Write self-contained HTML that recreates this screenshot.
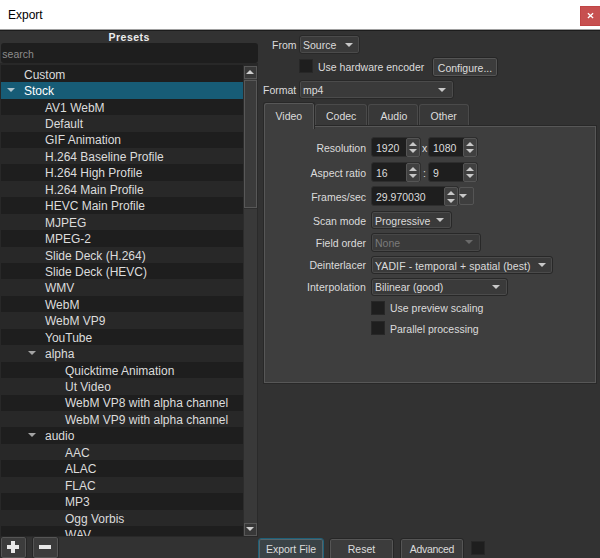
<!DOCTYPE html>
<html><head><meta charset="utf-8">
<style>
*{box-sizing:border-box;margin:0;padding:0}
html,body{width:600px;height:558px;overflow:hidden;background:#323232;font-family:"Liberation Sans",sans-serif;color:#dcdcdc}
.a,.t,.row,.cb,.btn,.sb,.spb,.chk,.tab{position:absolute}
.t{white-space:pre;font-size:10.5px;line-height:12px}
.r{text-align:right}
.c{text-align:center}
.row{left:0;width:242px}
.ev{background:#1e1e1e}
.od{background:#282828}
.sel{background:#175c76}
.tr{position:absolute;white-space:pre;font-size:12px;line-height:14px;color:#dcdcdc}
.cb{border:1px solid #282828;box-shadow:inset 0 0 0 1px #4b4b4b;background:#3a3a3a;border-radius:3px}
.btn{border:1px solid #262626;box-shadow:inset 0 0 0 1px #555;background:#3c3c3c;border-radius:3px}
.sb{border:1px solid #2e2e2e;background:#1e1e1e;border-radius:3px}
.spb{border:1px solid #555;background:#404040;border-radius:2px}
.chk{width:14px;height:14px;background:#1e1e1e;border:1px solid #272727}
.tab{background:#383838;border:1px solid #4a4a4a;border-bottom:none;border-radius:3px 3px 0 0;box-shadow:1px 0 0 0 #2c2c2c}
</style></head><body>

<div class="a" style="left:0px;top:0px;width:600px;height:29px;background:#fff"></div>
<div class="t" style="left:8px;top:8px;font-size:12px;color:#000;line-height:14px">Export</div>
<div class="a" style="left:0px;top:29px;width:600px;height:1px;background:#a0a0a0"></div>
<div class="a" style="left:0px;top:30px;width:600px;height:1px;background:#1c1c1c"></div>
<div class="a" style="left:580px;top:6px;width:20px;height:20px;background:#c75050;border:1px solid #c04545;border-right:none"></div>
<svg class="a" style="left:587px;top:12px" width="7" height="7" viewBox="0 0 7 7"><path d="M0.9 1.2L6.1 5.9M6.1 1.2L0.9 5.9" stroke="#fff" stroke-width="1.3"/></svg>
<div class="t" style="left:108.5px;top:31px;color:#ececec;font-weight:bold;letter-spacing:0.5px">Presets</div>
<div class="a" style="left:0px;top:63px;width:258px;height:474px;background:#282828"></div>
<div class="a" style="left:1px;top:43px;width:257px;height:20px;background:#1e1e1e;border-radius:3px"></div>
<div class="t" style="left:2.3px;top:48.3px;color:#8c8c8c">search</div>
<div class="a" style="left:0;top:0;width:600px;height:558px;overflow:hidden">
<div class="a" style="left:1px;top:65px;width:242px;height:471px;overflow:hidden;background:#1e1e1e">
<div class="row ev" style="left:0;top:0.76px;height:16.440px"></div>
<div class="row sel" style="left:0;top:17.20px;height:16.440px"></div>
<div class="row ev" style="left:0;top:33.64px;height:16.440px"></div>
<div class="row od" style="left:0;top:50.08px;height:16.440px"></div>
<div class="row ev" style="left:0;top:66.52px;height:16.440px"></div>
<div class="row od" style="left:0;top:82.96px;height:16.440px"></div>
<div class="row ev" style="left:0;top:99.40px;height:16.440px"></div>
<div class="row od" style="left:0;top:115.84px;height:16.440px"></div>
<div class="row ev" style="left:0;top:132.28px;height:16.440px"></div>
<div class="row od" style="left:0;top:148.72px;height:16.440px"></div>
<div class="row ev" style="left:0;top:165.16px;height:16.440px"></div>
<div class="row od" style="left:0;top:181.60px;height:16.440px"></div>
<div class="row ev" style="left:0;top:198.04px;height:16.440px"></div>
<div class="row od" style="left:0;top:214.48px;height:16.440px"></div>
<div class="row ev" style="left:0;top:230.92px;height:16.440px"></div>
<div class="row od" style="left:0;top:247.36px;height:16.440px"></div>
<div class="row ev" style="left:0;top:263.80px;height:16.440px"></div>
<div class="row od" style="left:0;top:280.24px;height:16.440px"></div>
<div class="row ev" style="left:0;top:296.68px;height:16.440px"></div>
<div class="row od" style="left:0;top:313.12px;height:16.440px"></div>
<div class="row ev" style="left:0;top:329.56px;height:16.440px"></div>
<div class="row od" style="left:0;top:346.00px;height:16.440px"></div>
<div class="row ev" style="left:0;top:362.44px;height:16.440px"></div>
<div class="row od" style="left:0;top:378.88px;height:16.440px"></div>
<div class="row ev" style="left:0;top:395.32px;height:16.440px"></div>
<div class="row od" style="left:0;top:411.76px;height:16.440px"></div>
<div class="row ev" style="left:0;top:428.20px;height:16.440px"></div>
<div class="row od" style="left:0;top:444.64px;height:16.440px"></div>
<div class="row ev" style="left:0;top:461.08px;height:16.440px"></div>
<div class="tr" style="left:23px;top:2.66px">Custom</div>
<svg class="a" style="left:6px;top:22.90px" width="8" height="4"><polygon points="0,0 4,4 8,0" fill="#b0c4cc"/></svg>
<div class="tr" style="left:23px;top:19.10px;color:#fff">Stock</div>
<div class="tr" style="left:44px;top:35.54px">AV1 WebM</div>
<div class="tr" style="left:44px;top:51.98px">Default</div>
<div class="tr" style="left:44px;top:68.42px">GIF Animation</div>
<div class="tr" style="left:44px;top:84.86px">H.264 Baseline Profile</div>
<div class="tr" style="left:44px;top:101.30px">H.264 High Profile</div>
<div class="tr" style="left:44px;top:117.74px">H.264 Main Profile</div>
<div class="tr" style="left:44px;top:134.18px">HEVC Main Profile</div>
<div class="tr" style="left:44px;top:150.62px">MJPEG</div>
<div class="tr" style="left:44px;top:167.06px">MPEG-2</div>
<div class="tr" style="left:44px;top:183.50px">Slide Deck (H.264)</div>
<div class="tr" style="left:44px;top:199.94px">Slide Deck (HEVC)</div>
<div class="tr" style="left:44px;top:216.38px">WMV</div>
<div class="tr" style="left:44px;top:232.82px">WebM</div>
<div class="tr" style="left:44px;top:249.26px">WebM VP9</div>
<div class="tr" style="left:44px;top:265.70px">YouTube</div>
<svg class="a" style="left:27px;top:285.94px" width="8" height="4"><polygon points="0,0 4,4 8,0" fill="#a4a4a4"/></svg>
<div class="tr" style="left:44px;top:282.14px">alpha</div>
<div class="tr" style="left:64px;top:298.58px">Quicktime Animation</div>
<div class="tr" style="left:64px;top:315.02px">Ut Video</div>
<div class="tr" style="left:64px;top:331.46px">WebM VP8 with alpha channel</div>
<div class="tr" style="left:64px;top:347.90px">WebM VP9 with alpha channel</div>
<svg class="a" style="left:27px;top:368.14px" width="8" height="4"><polygon points="0,0 4,4 8,0" fill="#a4a4a4"/></svg>
<div class="tr" style="left:44px;top:364.34px">audio</div>
<div class="tr" style="left:64px;top:380.78px">AAC</div>
<div class="tr" style="left:64px;top:397.22px">ALAC</div>
<div class="tr" style="left:64px;top:413.66px">FLAC</div>
<div class="tr" style="left:64px;top:430.10px">MP3</div>
<div class="tr" style="left:64px;top:446.54px">Ogg Vorbis</div>
<div class="tr" style="left:64px;top:462.98px">WAV</div>
</div></div>
<div class="a" style="left:243px;top:66px;width:15px;height:470px;background:#393939;border-left:1px solid #2c2c2c;border-right:1px solid #2a2a2a"></div>
<div class="a" style="left:244px;top:208px;width:13px;height:1px;background:#2e2e2e"></div>
<div class="a" style="left:244px;top:66px;width:13px;height:13px;border:1px solid #585858;background:#383838"></div>
<svg class="a" style="left:246px;top:70px" width="8" height="4"><polygon points="0,4 4.0,0 8,4" fill="#cfcfcf"/></svg>
<div class="a" style="left:244px;top:80px;width:13px;height:128px;border:1px solid #585858;background:#3b3b3b"></div>
<div class="a" style="left:244px;top:523px;width:13px;height:13px;border:1px solid #585858;background:#383838"></div>
<svg class="a" style="left:246px;top:527px" width="8" height="4"><polygon points="0,0 4.0,4 8,0" fill="#cfcfcf"/></svg>
<div class="btn" style="left:0px;top:536px;width:27px;height:23px"></div>
<div class="a" style="left:11px;top:541px;width:4px;height:12px;background:#e8e8e8"></div>
<div class="a" style="left:7px;top:545px;width:12px;height:4px;background:#e8e8e8"></div>
<div class="btn" style="left:32px;top:536px;width:27px;height:23px"></div>
<div class="a" style="left:39px;top:545px;width:12px;height:4px;background:#e8e8e8"></div>
<div class="t" style="left:272px;top:39px">From</div>
<div class="cb" style="left:299px;top:35px;width:61px;height:19px"></div>
<div class="t" style="left:303px;top:39px">Source</div>
<svg class="a" style="left:345px;top:43px" width="8" height="4"><polygon points="0,0 4.0,4 8,0" fill="#c8c8c8"/></svg>
<div class="chk" style="left:299px;top:59px;width:14px;height:14px"></div>
<div class="t" style="left:318px;top:61px">Use hardware encoder</div>
<div class="btn" style="left:432px;top:57px;width:66px;height:20px"></div>
<div class="t c" style="left:432.5px;top:62px;width:65px">Configure...</div>
<div class="t" style="left:263px;top:84px">Format</div>
<div class="cb" style="left:299px;top:80px;width:155px;height:19px"></div>
<div class="t" style="left:303px;top:84px">mp4</div>
<svg class="a" style="left:438px;top:88px" width="8" height="4"><polygon points="0,0 4.0,4 8,0" fill="#c8c8c8"/></svg>
<div class="tab" style="left:315px;top:104px;width:52px;height:22px"></div>
<div class="tab" style="left:368px;top:104px;width:50px;height:22px"></div>
<div class="tab" style="left:419px;top:104px;width:50px;height:22px"></div>
<div class="a" style="left:263px;top:125px;width:334px;height:259px;background:#3e3e3e;border:1px solid #282828;box-shadow:inset 0 0 0 1px #575757"></div>
<div class="a" style="left:263px;top:102px;width:52px;height:27px;background:#3e3e3e;border:1px solid #282828;border-bottom:none;border-radius:3px 3px 0 0;box-shadow:inset 1px 1px 0 0 #575757,inset -1px 0 0 0 #575757"></div>
<div class="t" style="left:275.5px;top:109.5px">Video</div>
<div class="t" style="left:326px;top:110px">Codec</div>
<div class="t" style="left:380.5px;top:110px">Audio</div>
<div class="t" style="left:430.5px;top:110px">Other</div>
<div class="t r" style="left:216px;top:142px;width:150px">Resolution</div>
<div class="sb" style="left:371px;top:137px;width:50px;height:20px"></div>
<div class="t" style="left:376px;top:142px">1920</div>
<div class="spb" style="left:406px;top:138px;width:14px;height:19px"></div>
<svg class="a" style="left:409px;top:141.5px" width="8" height="4"><polygon points="0,4 4.0,0 8,4" fill="#c8c8c8"/></svg>
<svg class="a" style="left:409px;top:148.5px" width="8" height="4"><polygon points="0,0 4.0,4 8,0" fill="#c8c8c8"/></svg>
<div class="t" style="left:422px;top:142px">x</div>
<div class="sb" style="left:428px;top:137px;width:50px;height:20px"></div>
<div class="t" style="left:433px;top:142px">1080</div>
<div class="spb" style="left:463px;top:138px;width:14px;height:19px"></div>
<svg class="a" style="left:466px;top:141.5px" width="8" height="4"><polygon points="0,4 4.0,0 8,4" fill="#c8c8c8"/></svg>
<svg class="a" style="left:466px;top:148.5px" width="8" height="4"><polygon points="0,0 4.0,4 8,0" fill="#c8c8c8"/></svg>
<div class="t r" style="left:216px;top:167px;width:150px">Aspect ratio</div>
<div class="sb" style="left:371px;top:162px;width:50px;height:20px"></div>
<div class="t" style="left:376px;top:167px">16</div>
<div class="spb" style="left:406px;top:163px;width:14px;height:19px"></div>
<svg class="a" style="left:409px;top:166.5px" width="8" height="4"><polygon points="0,4 4.0,0 8,4" fill="#c8c8c8"/></svg>
<svg class="a" style="left:409px;top:173.5px" width="8" height="4"><polygon points="0,0 4.0,4 8,0" fill="#c8c8c8"/></svg>
<div class="t" style="left:423px;top:167px">:</div>
<div class="sb" style="left:428px;top:162px;width:50px;height:20px"></div>
<div class="t" style="left:433px;top:167px">9</div>
<div class="spb" style="left:463px;top:163px;width:14px;height:19px"></div>
<svg class="a" style="left:466px;top:166.5px" width="8" height="4"><polygon points="0,4 4.0,0 8,4" fill="#c8c8c8"/></svg>
<svg class="a" style="left:466px;top:173.5px" width="8" height="4"><polygon points="0,0 4.0,4 8,0" fill="#c8c8c8"/></svg>
<div class="t r" style="left:216px;top:191px;width:150px">Frames/sec</div>
<div class="sb" style="left:371px;top:186px;width:88px;height:20px"></div>
<div class="t" style="left:376px;top:191px">29.970030</div>
<div class="spb" style="left:444px;top:187px;width:14px;height:19px"></div>
<svg class="a" style="left:447px;top:190.5px" width="8" height="4"><polygon points="0,4 4.0,0 8,4" fill="#c8c8c8"/></svg>
<svg class="a" style="left:447px;top:198.5px" width="8" height="4"><polygon points="0,0 4.0,4 8,0" fill="#c8c8c8"/></svg>
<div class="spb" style="left:459px;top:187px;width:15px;height:18px;background:#3e3e3e"></div>
<svg class="a" style="left:459px;top:194px" width="8" height="4"><polygon points="0,0 4.0,4 8,0" fill="#c8c8c8"/></svg>
<div class="t r" style="left:216px;top:215px;width:150px">Scan mode</div>
<div class="cb" style="left:371px;top:211px;width:81px;height:18px"></div>
<div class="t" style="left:375px;top:215px">Progressive</div>
<svg class="a" style="left:436px;top:218px" width="8" height="4"><polygon points="0,0 4.0,4 8,0" fill="#c8c8c8"/></svg>
<div class="t r" style="left:216px;top:236.5px;width:150px">Field order</div>
<div class="cb" style="left:371px;top:233px;width:110px;height:19px;box-shadow:inset 0 0 0 1px #474747"></div>
<div class="t" style="left:375px;top:237px;color:#7a7a7a">None</div>
<svg class="a" style="left:465px;top:240px" width="8" height="4"><polygon points="0,0 4.0,4 8,0" fill="#6a6a6a"/></svg>
<div class="t r" style="left:216px;top:259px;width:150px">Deinterlacer</div>
<div class="cb" style="left:371px;top:256px;width:182px;height:18px"></div>
<div class="t" style="left:375px;top:259.5px;letter-spacing:0.1px">YADIF - temporal + spatial (best)</div>
<svg class="a" style="left:538px;top:262.5px" width="8" height="4"><polygon points="0,0 4.0,4 8,0" fill="#c8c8c8"/></svg>
<div class="t r" style="left:216px;top:280.5px;width:150px;letter-spacing:0.1px">Interpolation</div>
<div class="cb" style="left:371px;top:278px;width:137px;height:18px"></div>
<div class="t" style="left:375px;top:281px">Bilinear (good)</div>
<svg class="a" style="left:492px;top:284.5px" width="8" height="4"><polygon points="0,0 4.0,4 8,0" fill="#c8c8c8"/></svg>
<div class="chk" style="left:371px;top:300.6px;width:14px;height:14px"></div>
<div class="t" style="left:390px;top:302px">Use preview scaling</div>
<div class="chk" style="left:371px;top:321.3px;width:14px;height:14px"></div>
<div class="t" style="left:390px;top:322.7px">Parallel processing</div>
<div class="btn" style="left:258px;top:538px;width:66px;height:24px;border-color:#1e6078;box-shadow:inset 0 0 0 1px #56646a;background:#3a4347"></div>
<div class="t c" style="left:258px;top:543px;width:66px">Export File</div>
<div class="btn" style="left:329px;top:538px;width:65px;height:24px"></div>
<div class="t c" style="left:329px;top:543px;width:65px">Reset</div>
<div class="btn" style="left:400px;top:538px;width:64px;height:24px"></div>
<div class="t c" style="left:400px;top:543px;width:64px;letter-spacing:-0.3px">Advanced</div>
<div class="chk" style="left:470.5px;top:540.5px;width:14px;height:14px"></div>
</body></html>
